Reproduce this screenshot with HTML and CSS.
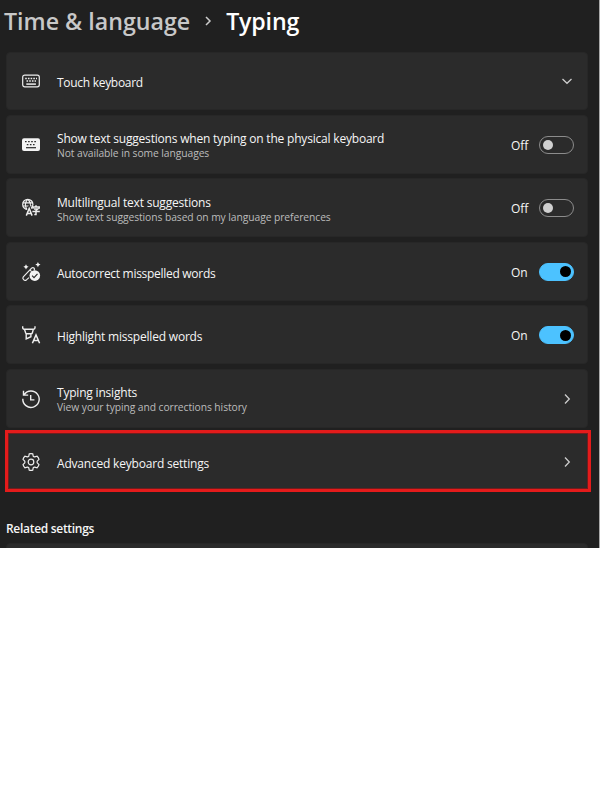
FILE: index.html
```
<!DOCTYPE html>
<html lang="en">
<head>
<meta charset="utf-8">
<title>Typing</title>
<link rel="stylesheet" href="styles.css">
</head>
<body>
<main class="panel">
  <h1 class="crumbs">
    <span class="parent">Time &amp; language</span>
    <svg class="sep" viewBox="0 0 8 12"><path d="M2 2l4 4-4 4"/></svg>
    <span class="current">Typing</span>
  </h1>
  <section class="list">
    <div class="card">
      <svg class="icon" viewBox="0 0 18 18"><rect x=".7" y="3.2" width="16.6" height="11.6" rx="2"/><path d="M3.2 6.4h11.8M4.5 9.1h9.5" stroke-dasharray="1.6 1.1" stroke-width="1.5"/><path d="M4.3 12.1h9.6" stroke-width="1.5"/></svg>
      <div class="text solo"><div class="title tight">Touch keyboard</div></div>
      <svg class="chev" viewBox="0 0 12 12"><path d="M1.5 4L6 8.3 10.5 4"/></svg>
    </div>
    <div class="card low">
      <svg class="icon" viewBox="0 0 18 18"><rect class="fill" x="0" y="2.2" width="18" height="12.8" rx="2"/><path class="cut" d="M3 5.7h12M4.8 8.6h9" stroke-dasharray="1.6 1.5"/><path class="cut" d="M4 11.7h10"/></svg>
      <div class="text"><div class="title">Show text suggestions when typing on the physical keyboard</div><div class="desc">Not available in some languages</div></div>
      <span class="state">Off</span><span class="toggle"></span>
    </div>
    <div class="card low">
      <svg class="icon" viewBox="0 0 18 18"><circle cx="5.8" cy="5.4" r="5.1"/><path d="M.8 3.8h10M.8 7h9M5.4.5C2.8 3.3 2.8 7.6 5 10.4M6.2.5C8 2.3 8.5 4.3 8.2 6.8"/><path class="halo" d="M5 16.5L7.3 9.8 9.6 16.5M11.5 8.5H17V11M14 10v6"/><path class="bold" d="M4.3 16.6L7.2 9.4l2.9 7.2M5.3 14.4h3.8"/><path class="bold" d="M14 6.2v1.4M11 9.8V7.9h6.2v1.9M12 10h3.7L14 11.5v4.1h-1.7M10.4 12.5h7.4"/></svg>
      <div class="text"><div class="title">Multilingual text suggestions</div><div class="desc">Show text suggestions based on my language preferences</div></div>
      <span class="state">Off</span><span class="toggle"></span>
    </div>
    <div class="card low">
      <svg class="icon" viewBox="0 0 18 18"><path d="M7 14.6L4.4 16.9c-1.9 1.3-4.6-1-3.1-3L9.6 5.2c1.6-1.6 3.9.5 2.4 2.2M8.1 7.1l1.6 1.5"/><path class="fill" d="M4 1.2l.9 1.7 1.7.9-1.7.9L4 6.4l-.9-1.7-1.7-.9 1.7-.9zM15.9-1l.9 1.8 1.7.8-1.7.9-.9 1.8-.8-1.8-1.8-.9 1.8-.8z"/><circle class="fill" cx="12.8" cy="12.6" r="5.3"/><path class="cut" d="M10.1 12.7l1.9 1.9 3.5-3.8"/></svg>
      <div class="text solo"><div class="title tight">Autocorrect misspelled words</div></div>
      <span class="state">On</span><span class="toggle on"></span>
    </div>
    <div class="card low">
      <svg class="icon" viewBox="0 0 18 18"><path class="marker" d="M.7.2v1.6c0 .9.5 1.4 1.4 1.4h9.5c.9 0 1.4-.5 1.4-1.4V.2M2.5 3.4l1.1 3.4c.2.8.6 1 1.2 1h4.4c.6 0 1-.3 1.2-1l.9-3.4M4.2 8v4.8l4.7-2.1V8"/><path class="bold" d="M10.4 17.3L14 9l3.6 8.3M11.7 14.6h4.6"/></svg>
      <div class="text solo"><div class="title">Highlight misspelled words</div></div>
      <span class="state">On</span><span class="toggle on"></span>
    </div>
    <div class="card low">
      <svg class="icon" viewBox="0 0 18 18"><path class="marker" d="M2.2 4.6A8.2 8.2 0 1 1 .8 8.8M1.5.8v4.3h4.7M8.7 5v4.9h3.7"/></svg>
      <div class="text"><div class="title">Typing insights</div><div class="desc">View your typing and corrections history</div></div>
      <svg class="chev" viewBox="0 0 12 12"><path d="M4 1.5L8.3 6 4 10.5"/></svg>
    </div>
    <div class="card marked">
      <svg class="icon" viewBox="0 0 18 18"><circle cx="9" cy="9" r="2.8"/><path d="M7.2.9Q9 .4 10.8.9L11.2 3.2Q11.8 4 12.7 3.9L15.1 3.2Q16.5 4.5 17 6.3L15.3 8Q14.8 9 15.3 10L17 11.7Q16.5 13.5 15.1 14.8L12.7 14.1Q11.8 14 11.2 14.8L10.8 17.1Q9 17.6 7.2 17.1L6.8 14.8Q6.2 14 5.3 14.1L2.9 14.8Q1.5 13.5 1 11.7L2.7 10Q3.2 9 2.7 8L1 6.3Q1.5 4.5 2.9 3.2L5.3 3.9Q6.2 4 6.8 3.2z"/></svg>
      <div class="text solo"><div class="title">Advanced keyboard settings</div></div>
      <svg class="chev" viewBox="0 0 12 12"><path d="M4 1.5L8.3 6 4 10.5"/></svg>
    </div>
  </section>
  <h2 class="related">Related settings</h2>
  <div class="card peek"></div>
</main>
</body>
</html>
```
FILE: styles.css
```
* { box-sizing: border-box; }
body { margin: 0; background: #fff; font-family: "Open Sans", "Noto Sans", sans-serif; }
.panel { width: 599px; height: 548px; overflow: hidden; background: #202020; color: #f6f6f6; box-shadow: 1px 0 #aaa; }
.crumbs { display: flex; align-items: center; height: 52px; margin: 0; padding: 0 0 11px 4px; font-size: 23.2px; font-weight: 600; line-height: 32px; white-space: nowrap; }
.parent { color: #c8c8c8; }
.current { color: #fff; letter-spacing: -.15px; }
.sep { width: 8px; height: 12px; margin: 0 14px 0 14px; fill: none; stroke: #ccc; stroke-width: 1.5; }
.list { display: grid; grid-template-rows: 58px repeat(6, 59px); row-gap: 4.5px; padding: 0 11px 0 6px; }
.card { display: flex; align-items: center; padding: 0 13px 0 15px; background: #2b2b2b; border: 1px solid #272727; border-radius: 4px; }
.card.low { padding-top: 1.5px; }
.icon { flex: none; width: 18px; height: 18px; margin-right: 17px; overflow: visible; fill: none; stroke: #eee; stroke-width: 1.2; }
.icon .fill { fill: #f4f4f4; stroke: none; }
.icon .cut { stroke: #2b2b2b; }
.icon .bold { stroke-width: 1.5; }
.icon .marker { stroke-width: 1.4; }
.icon .halo { stroke: #2b2b2b; stroke-width: 3.5; }
.text { flex: 1; padding-top: 2px; white-space: nowrap; }
.text.solo { padding-top: 4px; }
.title { font-size: 12px; line-height: 16px; letter-spacing: -.2px; }
.title.tight { letter-spacing: -.29px; }
.desc { font-size: 10.3px; line-height: 13px; letter-spacing: -.07px; color: #bcbcbc; }
.state { width: 28px; padding-top: 1px; font-size: 12px; }
.toggle { width: 35px; height: 18px; padding: 3px; border: 1px solid #8c8c8c; border-radius: 9px; }
.toggle::before { content: ""; display: block; width: 10px; height: 10px; border-radius: 50%; background: #d0d0d0; }
.toggle.on { background: #4cc2ff; border-color: #4cc2ff; }
.toggle.on::before { width: 11px; height: 11px; margin: -.5px -.5px 0 auto; background: #000; }
.chev { width: 12px; height: 12px; margin-right: 1px; fill: none; stroke: #ccc; stroke-width: 1.3; }
.marked { position: relative; }
.marked::after { content: ""; position: absolute; top: -3px; right: -4px; bottom: -2px; left: -2px; border: 3.5px solid #e41b1b; box-shadow: inset 0 0 0 1px #701d1d; }
.related { margin: 28px 0 0 6px; font-size: 12px; font-weight: 600; line-height: 20px; letter-spacing: -.3px; }
.peek { height: 30px; margin: 4px 11px 0 6px; }
```
